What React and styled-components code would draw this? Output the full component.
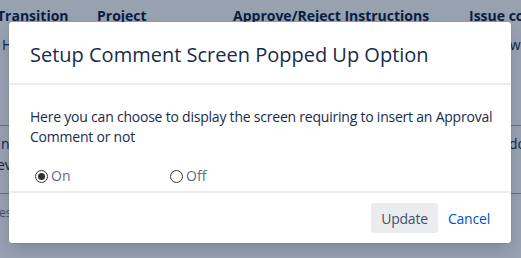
import React from "react";
import styled, { createGlobalStyle } from "styled-components";

const Global = createGlobalStyle`
  html, body { margin: 0; padding: 0; background: #fff; overflow: hidden; }
  body { font-family: "Open Sans", "Noto Sans", Arial, sans-serif; color: #172b4d; }
`;

const Page = styled.div`
  width: 521px;
  height: 258px;
  overflow: hidden;
  position: relative;
`;

const Table = styled.div`
  margin-left: -3px;
  display: flex;
  flex-direction: column;
`;

const Row = styled.div`
  display: grid;
  grid-template-columns: 100px 136px 236px 1fr;
  align-items: start;
  height: ${(p) => p.$h}px;
  padding-top: ${(p) => p.$pt}px;
  box-sizing: border-box;
  border-bottom: ${(p) => (p.$line ? "1px solid #a5adba" : "none")};
  font-size: 14px;
  line-height: 21px;
  white-space: nowrap;
`;

const Head = styled.div`
  font-weight: 700;
  font-size: 14px;
  color: #091e42;
`;

const Cell = styled.div`
  font-size: ${(p) => p.$size || 14}px;
  color: ${(p) => (p.$muted ? "#6b778c" : "#172b4d")};
  padding-left: ${(p) => p.$pl || 0}px;
`;

const Blanket = styled.div`
  position: absolute;
  inset: 0;
  background: rgba(9, 30, 66, 0.42);
`;

const Dialog = styled.div`
  position: absolute;
  left: 9px;
  top: 22px;
  width: 502px;
  height: 221px;
  background: #fff;
  border-radius: 3px;
  box-shadow: 0 0 1px rgba(9, 30, 66, 0.31), 0 8px 16px -4px rgba(9, 30, 66, 0.25);
  display: flex;
  flex-direction: column;
  overflow: hidden;
`;

const Header = styled.div`
  height: 63px;
  box-sizing: border-box;
  padding: 21px 21px 0;
  border-bottom: 2px solid #ebecf0;
`;

const Title = styled.h1`
  margin: 0;
  font-size: 20px;
  font-weight: 400;
  line-height: 24px;
  color: #172b4d;
`;

const Body = styled.div`
  flex: 1;
  padding: 22px 14px 0 21px;
  font-size: 14px;
  line-height: 20px;
  color: #172b4d;
  border-bottom: 2px solid #ebecf0;
`;

const Text = styled.p`
  margin: 0;
  letter-spacing: -0.22px;
`;

const Options = styled.div`
  display: flex;
  margin-top: 19px;
  padding-left: 5px;
`;

const Option = styled.label`
  display: flex;
  align-items: center;
  width: 135px;
  gap: 3px;
  color: #5e6c84;
  font-size: 14px;
  line-height: 20px;
`;

const Radio = styled.span`
  width: 11px;
  height: 11px;
  border: 1px solid #333;
  border-radius: 50%;
  display: inline-flex;
  align-items: center;
  justify-content: center;
  &::after {
    content: "";
    width: 7px;
    height: 7px;
    border-radius: 50%;
    background: ${(p) => (p.$checked ? "#333" : "transparent")};
  }
`;

const Footer = styled.div`
  height: 50px;
  box-sizing: border-box;
  display: flex;
  align-items: center;
  justify-content: flex-end;
  padding: 0 15px 0 0;
  gap: 4px;
`;

const Button = styled.button`
  font-family: inherit;
  font-size: 14px;
  letter-spacing: -0.2px;
  height: 30px;
  padding: 0 ${(p) => (p.$link ? 6 : 10)}px;
  border: none;
  border-radius: 3px;
  background: ${(p) => (p.$link ? "transparent" : "#ebecf0")};
  color: ${(p) => (p.$link ? "#0052cc" : "#42526e")};
  cursor: pointer;
`;

export default function App() {
  return (
    <Page>
      <Global />
      <Table>
        <Row $h={31} $pt={5}>
          <Head>Transition</Head>
          <Head>Project</Head>
          <Head>Approve/Reject Instructions</Head>
          <Head>Issue count</Head>
        </Row>
        <Row $h={95} $pt={3} $line>
          <Cell $pl={5}>Hold</Cell>
          <Cell>All</Cell>
          <Cell>Approve</Cell>
          <Cell $pl={16}>Show</Cell>
        </Row>
        <Row $h={68} $pt={7} $line>
          <Cell>Incoming<br />events</Cell>
          <Cell>All</Cell>
          <Cell>Reject</Cell>
          <Cell $pl={40}>docs</Cell>
        </Row>
        <Row $h={30} $pt={8}>
          <Cell $size={12} $muted $pl={2}>es</Cell>
        </Row>
      </Table>
      <Blanket />
      <Dialog role="dialog">
        <Header>
          <Title>Setup Comment Screen Popped Up Option</Title>
        </Header>
        <Body>
          <Text>
            Here you can choose to display the screen requiring to insert an Approval Comment or not
          </Text>
          <Options>
            <Option>
              <Radio $checked />
              On
            </Option>
            <Option>
              <Radio />
              Off
            </Option>
          </Options>
        </Body>
        <Footer>
          <Button>Update</Button>
          <Button $link>Cancel</Button>
        </Footer>
      </Dialog>
    </Page>
  );
}
